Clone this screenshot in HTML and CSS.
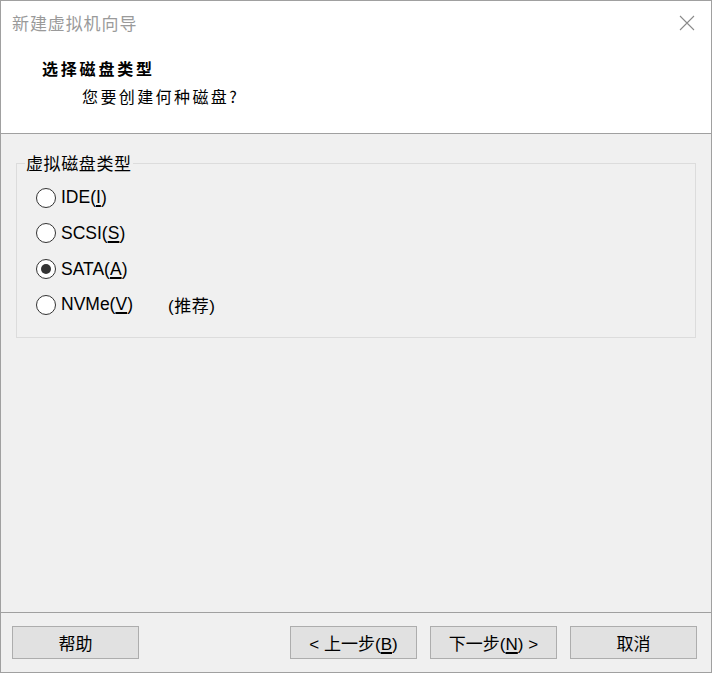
FILE: index.html
```html
<!DOCTYPE html>
<html lang="zh-CN">
<head>
<meta charset="utf-8">
<title>新建虚拟机向导</title>
<link rel="stylesheet" href="styles.css">
</head>
<body>
<div class="window">
  <div class="header">
    <div class="titlebar">
      <span class="title">新建虚拟机向导</span>
      <svg class="close" width="16" height="16" viewBox="0 0 16 16"><path d="M1 1 L15 15 M15 1 L1 15" stroke="#8a8a8a" stroke-width="1.1" fill="none"/></svg>
    </div>
    <div class="heading">选择磁盘类型</div>
    <div class="subheading">您要创建何种磁盘?</div>
  </div>
  <div class="content">
    <fieldset class="group">
      <legend>虚拟磁盘类型</legend>
      <div class="option"><span class="radio"></span><span class="label">IDE(<u>I</u>)</span></div>
      <div class="option"><span class="radio"></span><span class="label">SCSI(<u>S</u>)</span></div>
      <div class="option"><span class="radio checked"></span><span class="label">SATA(<u>A</u>)</span></div>
      <div class="option"><span class="radio"></span><span class="label wide">NVMe(<u>V</u>)</span><span class="note">(推荐)</span></div>
    </fieldset>
  </div>
  <div class="footer">
    <button class="btn">帮助</button>
    <div class="spacer"></div>
    <button class="btn">&lt; 上一步(<u>B</u>)</button>
    <button class="btn">下一步(<u>N</u>) &gt;</button>
    <button class="btn">取消</button>
  </div>
</div>
</body>
</html>
```
FILE: styles.css
```css
* { box-sizing: border-box; }
html, body { margin: 0; padding: 0; }
body {
  width: 712px;
  height: 673px;
  font-family: "Liberation Sans", "Noto Sans CJK SC", sans-serif;
  background: #f0f0f0;
}
.window {
  width: 712px;
  height: 673px;
  border: 1px solid #a0a0a0;
  display: flex;
  flex-direction: column;
  background: #f0f0f0;
}
.header {
  height: 133px;
  background: #ffffff;
  border-bottom: 1px solid #a0a0a0;
  flex: none;
}
.titlebar {
  height: 42px;
  display: flex;
  align-items: center;
  justify-content: space-between;
  padding: 0 16px 0 11px;
}
.title {
  font-family: "Noto Sans CJK SC", sans-serif;
  font-size: 17px;
  letter-spacing: 0.9px;
  color: #9a9a9a;
}
.close { display: block; margin-top: 2px; }
.heading {
  font-family: "Noto Sans CJK SC", sans-serif;
  font-weight: bold;
  font-size: 16px;
  letter-spacing: 2.8px;
  color: #000;
  padding-left: 41px;
  margin-top: 14px;
  line-height: 22px;
}
.subheading {
  font-family: "Noto Sans CJK SC", sans-serif;
  font-size: 16px;
  letter-spacing: 2.4px;
  color: #000;
  padding-left: 81px;
  margin-top: 6px;
  line-height: 22px;
}
.content {
  flex: 1;
  padding: 19px 15px 0 15px;
}
.group {
  margin: 0;
  border: 1px solid #dcdcdc;
  padding: 7px 0 0 19px;
  height: 185px;
}
.group legend {
  font-family: "Noto Sans CJK SC", sans-serif;
  font-size: 17px;
  letter-spacing: 0.6px;
  color: #000;
  padding: 0 1px;
  margin-left: -11px;
  line-height: 20px;
}
.option {
  display: flex;
  align-items: center;
  height: 35.67px;
  font-size: 17.5px;
  color: #000;
}
.radio {
  width: 20px;
  height: 20px;
  border: 1px solid #333;
  border-radius: 50%;
  background: #fff;
  margin-right: 5px;
  display: flex;
  align-items: center;
  justify-content: center;
  flex: none;
}
.radio.checked::after {
  content: "";
  width: 10px;
  height: 10px;
  border-radius: 50%;
  background: #333;
}
.label u, .btn u { text-decoration: underline; text-decoration-thickness: 1.5px; text-underline-offset: 2px; }
.label.wide { width: 107px; }
.note {
  font-family: "Liberation Sans", "Noto Sans CJK SC", sans-serif;
  font-size: 17px;
  letter-spacing: 0.5px;
  color: #000;
}
.footer {
  flex: none;
  height: 60px;
  border-top: 1px solid #a0a0a0;
  display: flex;
  align-items: flex-start;
  padding: 13px 14px 0 11px;
  gap: 13px;
}
.spacer { flex: 1; }
.btn {
  width: 127px;
  height: 33px;
  background: #e1e1e1;
  border: 1px solid #adadad;
  font-family: "Liberation Sans", "Noto Sans CJK SC", sans-serif;
  font-size: 17px;
  color: #000;
  padding: 0;
  margin: 0;
}
```
